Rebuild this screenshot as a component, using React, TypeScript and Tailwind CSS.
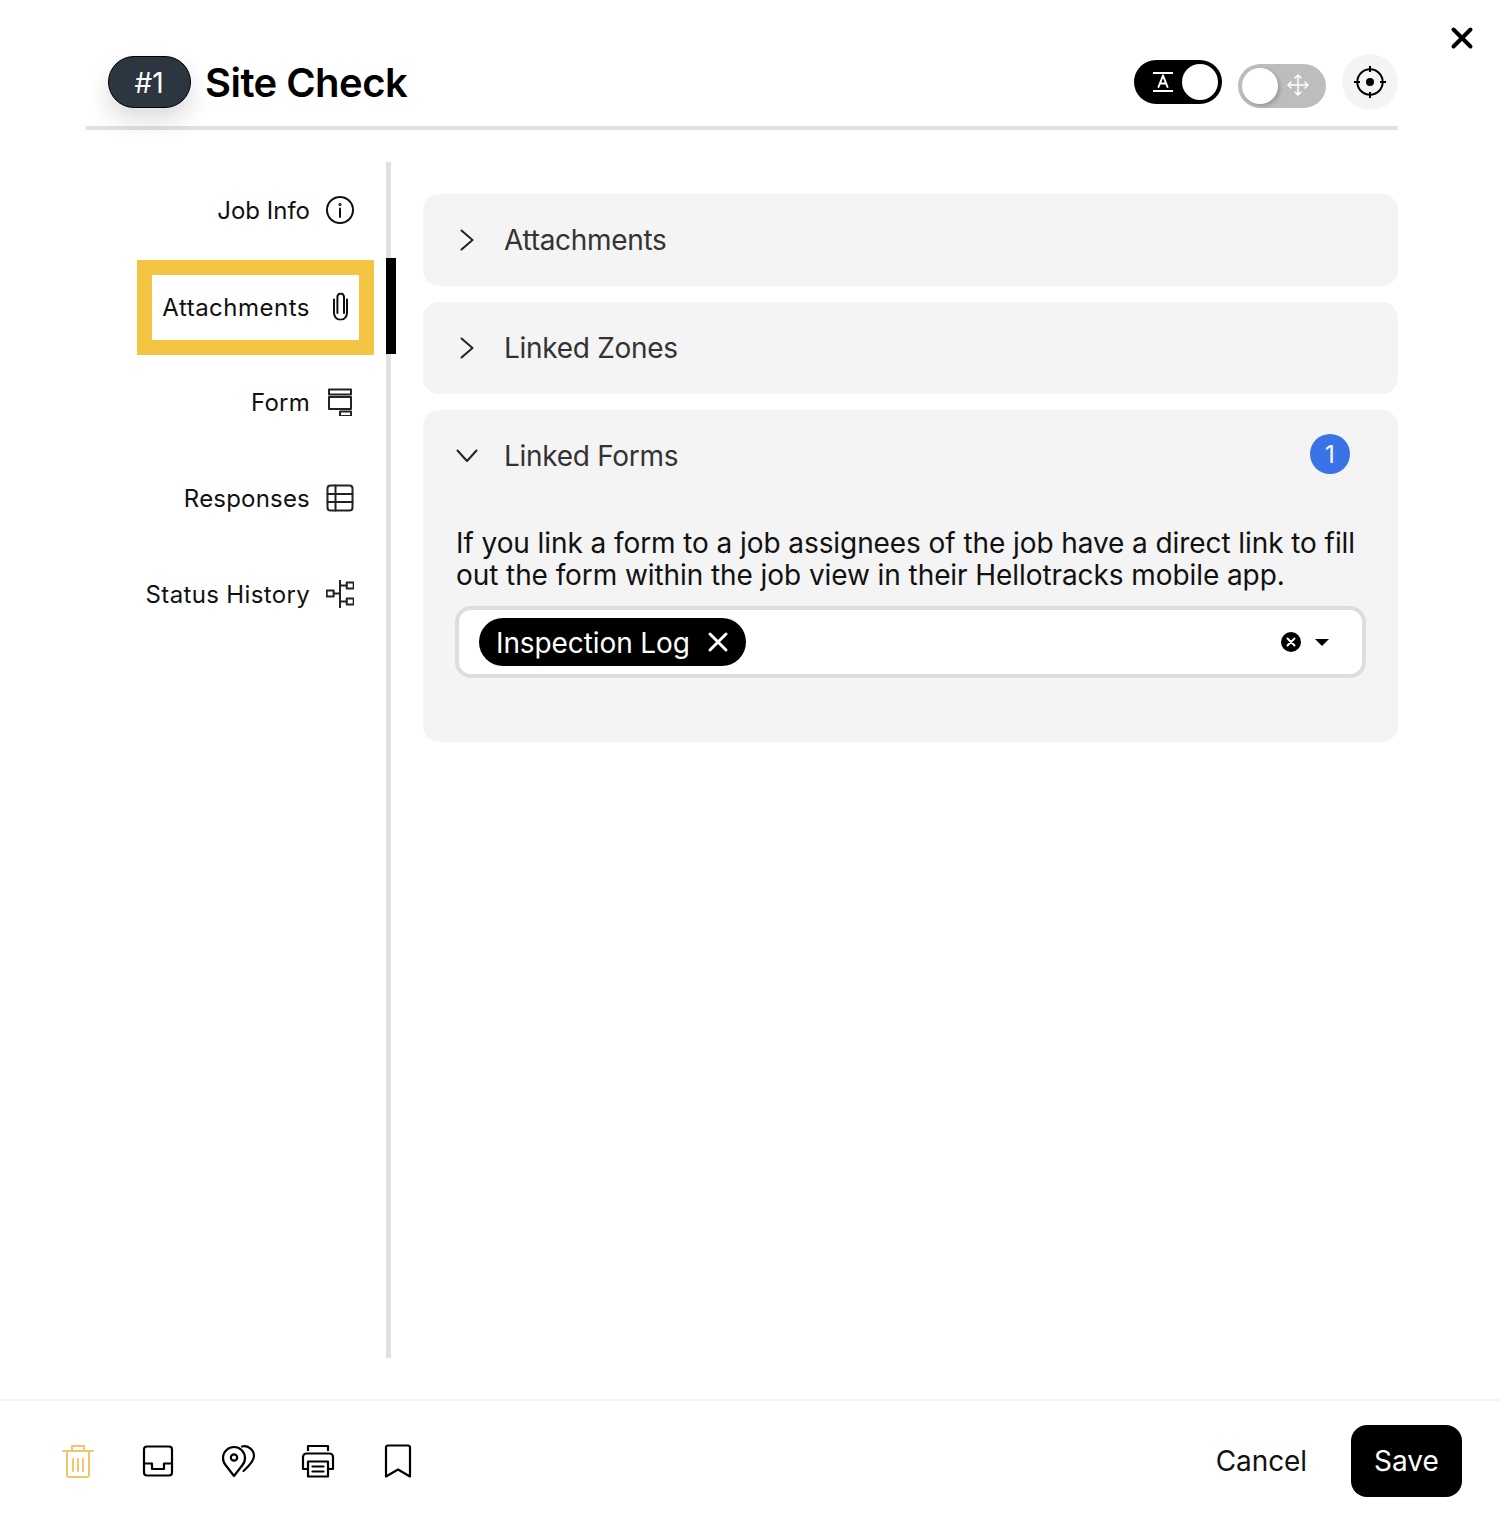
import React from "react";

const Ic = ({ w, h, children, c = "text-[#111]", sw = 2 }: { w: number; h: number; children: React.ReactNode; c?: string; sw?: number }) => (
  <svg width={w} height={h} viewBox={`0 0 ${w} ${h}`} fill="none" stroke="currentColor" strokeWidth={sw} strokeLinecap="round" strokeLinejoin="round" className={`block shrink-0 ${c}`}>
    {children}
  </svg>
);

const navIcons: Record<string, React.ReactNode> = {
  info: (
    <Ic w={28} h={28}>
      <circle cx="14" cy="14" r="13" />
      <path d="M14 12.5V21" />
      <circle cx="14" cy="8.5" r="0.6" />
    </Ic>
  ),
  clip: (
    <Ic w={28} h={28}>
      <path d="M8 7V20.5a6.5 6.85 0 0 0 13 0V7" />
      <path d="M11.4 20.5V4.5a3.3 3.5 0 0 1 6.6 0V20.5" />
    </Ic>
  ),
  form: (
    <Ic w={28} h={28} c="text-[#222]">
      <rect x="3" y="1.5" width="22" height="5" />
      <rect x="3" y="9" width="22" height="12" />
      <rect x="14" y="23.5" width="11" height="4.5" />
    </Ic>
  ),
  table: (
    <Ic w={28} h={28} c="text-[#222]">
      <rect x="1.5" y="1.5" width="25" height="25" rx="3" />
      <path d="M1.5 10h25M1.5 18h25M9.5 1.5v25" />
    </Ic>
  ),
  tree: (
    <Ic w={28} h={28} c="text-[#222]">
      <rect x="0.7" y="10.5" width="7" height="6" />
      <rect x="20.7" y="2.5" width="7" height="6" />
      <rect x="20.7" y="18.5" width="7" height="6" />
      <path d="M7.7 13.5H14M14 0.5v27M14 5.5h6.7M14 21.5h6.7" />
    </Ic>
  ),
};

const navItems = [
  { label: "Job Info", icon: "info", track: "tracking-[0px]" },
  { label: "Attachments", icon: "clip", active: true, track: "tracking-[0.5px]" },
  { label: "Form", icon: "form", track: "tracking-[0.25px]" },
  { label: "Responses", icon: "table", track: "tracking-[0.2px]" },
  { label: "Status History", icon: "tree", track: "tracking-[0.35px]" },
];

const Chevron = ({ open }: { open?: boolean }) => (
  <div className="w-[24px] h-[24px] flex items-center justify-center">
    {open ? (
      <Ic w={24} h={24} c="text-[#222]">
        <path d="M2.5 6.5 12 17l9.5-10.5" />
      </Ic>
    ) : (
      <Ic w={24} h={24} c="text-[#222]">
        <path d="M6.5 2.5 17.5 12 6.5 21.5" />
      </Ic>
    )}
  </div>
);

const AccordionHead = ({ title, open, badge }: { title: string; open?: boolean; badge?: string }) => (
  <div className="h-[92px] flex items-center pl-[32px] pr-[48px]">
    <Chevron open={open} />
    <span className="ml-[25px] text-[28px] leading-[32px] tracking-[-0.3px] text-[#333]">{title}</span>
    {badge && (
      <span className="ml-auto -mt-[4px] pt-[1px] w-[40px] h-[40px] rounded-full bg-[#3a72e8] text-white text-[24px] flex items-center justify-center">{badge}</span>
    )}
  </div>
);

export default function App() {
  return (
    <div className="relative h-[1514px] w-[1500px] overflow-hidden bg-white flex flex-col text-black font-['Inter',sans-serif]">
      <button className="absolute left-[1450px] top-[26px]" aria-label="Close">
        <Ic w={24} h={24} c="text-black" sw={4}>
          <path d="M3.5 3.5 20.5 20.5M20.5 3.5 3.5 20.5" />
        </Ic>
      </button>

      <header className="ml-[86px] mr-[102px] pt-[54px] pb-[16px] flex items-center border-b-[4px] border-[#e0e0e0]">
        <div className="ml-[22px] pt-[2px] pr-[1px] w-[83px] h-[52px] rounded-full bg-[#2b3640] border border-black text-white text-[28px] flex items-center justify-center shadow-[0_12px_24px_rgba(0,0,0,0.14)]">#1</div>
        <h1 className="ml-[14px] mt-[2px] text-[40px] leading-[48px] font-semibold tracking-[-0.55px]">Site Check</h1>
        <div className="ml-auto w-[88px] h-[44px] rounded-full bg-black flex items-center justify-between pl-[19px] pr-[4px]">
          <Ic w={20} h={20} c="text-white">
            <path d="M0 1h20M0 19h20M5.5 15 10 3.5 14.5 15M7 11.5h6" />
          </Ic>
          <span className="w-[36px] h-[36px] rounded-full bg-white" />
        </div>
        <div className="ml-[16px] mt-[8px] w-[88px] h-[44px] rounded-full bg-[#bdbdbd] flex items-center pl-[4px]">
          <span className="w-[36px] h-[36px] rounded-full bg-white shadow-[2px_2px_4px_rgba(0,0,0,0.2)]" />
          <span className="ml-[8px] -mt-[2px]">
            <Ic w={24} h={24} c="text-white" sw={1.5}>
              <path d="M12 2v20M2 12h20M9 5l3-3 3 3M9 19l3 3 3-3M5 9l-3 3 3 3M19 9l3 3-3 3" />
            </Ic>
          </span>
        </div>
        <div className="ml-[16px] w-[56px] h-[56px] rounded-full bg-[#f4f4f4] flex items-center justify-center">
          <svg width="32" height="32" viewBox="0 0 32 32" fill="none" stroke="currentColor" strokeWidth="2" className="block text-black">
            <circle cx="16" cy="16" r="12.7" />
            <circle cx="16" cy="16" r="4" fill="currentColor" stroke="none" />
            <path d="M16 0v6M16 26v6M0 16h6M26 16h6" />
          </svg>
        </div>
      </header>

      <main className="flex flex-1 min-h-0 mt-[32px] mb-[41px] ml-[86px] mr-[102px]">
        <nav className="w-[305px] shrink-0 border-r-[5px] border-[#e0e0e0] relative">
          {navItems.map((it) => (
            <div key={it.label} className="relative h-[96px] flex items-center justify-end pr-[27px]">
              <div className={it.active ? "w-[207px] h-[65px] mt-[3px] flex items-center justify-end pr-[5px] outline-[15px] outline-solid outline-[#f4c443]" : "flex items-center justify-end pr-[5px]"}>
                <div className={it.active ? "flex items-center gap-[16px] -translate-y-[1.5px]" : "flex items-center gap-[16px]"}>
                  <span className={`pt-[2px] text-[24px] leading-[32px] text-[#111] ${it.track}`}>{it.label}</span>
                  {navIcons[it.icon]}
                </div>
              </div>
              {it.active && <span className="absolute -right-[10px] top-0 w-[10px] h-[96px] bg-black" />}
            </div>
          ))}
        </nav>

        <section className="flex-1 pl-[32px] pt-[32px] flex flex-col gap-[16px]">
          <div className="rounded-[16px] bg-[#f4f4f4]">
            <AccordionHead title="Attachments" />
          </div>
          <div className="rounded-[16px] bg-[#f4f4f4]">
            <AccordionHead title="Linked Zones" />
          </div>
          <div className="rounded-[16px] bg-[#f4f4f4] h-[332px]">
            <AccordionHead title="Linked Forms" open badge="1" />
            <p className="mx-[33px] mt-[25px] text-[28px] leading-[32px] tracking-[-0.08px] text-[#111]">
              If you link a form to a job assignees of the job have a direct link to fill out the form within the job view in their Hellotracks mobile app.
            </p>
            <div className="ml-[32px] mt-[15px] w-[911px] h-[72px] rounded-[16px] border-[4px] border-[#dddddd] bg-white flex items-center pl-[20px] pr-[33px]">
              <div className="h-[48px] w-[267px] rounded-full bg-black text-white flex items-center pl-[17px]">
                <span className="pt-[2px] text-[28px] leading-[32px] tracking-[-0.1px]">Inspection Log</span>
                <span className="ml-[17px]">
                  <Ic w={22} h={22} c="text-white" sw={3}>
                    <path d="M3 3 19 19M19 3 3 19" />
                  </Ic>
                </span>
              </div>
              <div className="ml-auto w-[20px] h-[20px] rounded-full bg-black flex items-center justify-center">
                <Ic w={10} h={10} c="text-white" sw={2}>
                  <path d="M1.5 1.5 8.5 8.5M8.5 1.5 1.5 8.5" />
                </Ic>
              </div>
              <div className="ml-[14px] w-0 h-0 border-x-[7px] border-x-transparent border-t-[7px] border-t-black" />
            </div>
          </div>
        </section>
      </main>

      <footer className="h-[115px] border-t-[2px] border-[#f4f4f4] flex items-center px-[38px] pt-[7px]">
        <div className="flex items-center gap-[40px] ml-[20px]">
          <Ic w={40} h={40} c="text-[#f0c56b]">
            <path d="M5 10h30M14 10V5h12v5M9 10v24a2 2 0 0 0 2 2h18a2 2 0 0 0 2-2V10M15 18v12M20 18v12M25 18v12" />
          </Ic>
          <Ic w={40} h={40} c="text-black" sw={2.2}>
            <rect x="6" y="5.5" width="28" height="29" rx="3" />
            <path d="M6 22.5h8v5.5h12v-5.5h8" />
          </Ic>
          <Ic w={40} h={40} c="text-black" sw={2.2}>
            <path d="M16 35 7.5 24a11 11 0 1 1 17 0Z" />
            <circle cx="16" cy="16.5" r="3.2" />
            <path d="M24 5.5C30 4 36 9 36 15c0 5-5 10-10.5 15" />
          </Ic>
          <Ic w={40} h={40} c="text-black" sw={2.2}>
            <path d="M10 10V5h20v5M10 28H5V16a3.5 3.5 0 0 1 3.5-3.5h23A3.5 3.5 0 0 1 35 16v12h-5" strokeLinecap="butt" />
            <rect x="10" y="20.5" width="20" height="15" />
            <path d="M14.5 25.500h11M14.500 30.500h11" />
          </Ic>
          <Ic w={40} h={40} c="text-black" sw={2.2}>
            <path d="M8 35.500V6.500a2 2 0 0 1 2-2h20a2 2 0 0 1 2 2v29l-12-7Z" />
          </Ic>
        </div>
        <span className="ml-auto text-[28px] leading-[32px] tracking-[-0.1px] text-[#111]">Cancel</span>
        <button className="ml-[44px] w-[111px] h-[72px] rounded-[16px] bg-black text-white text-[28px]">Save</button>
      </footer>
    </div>
  );
}
